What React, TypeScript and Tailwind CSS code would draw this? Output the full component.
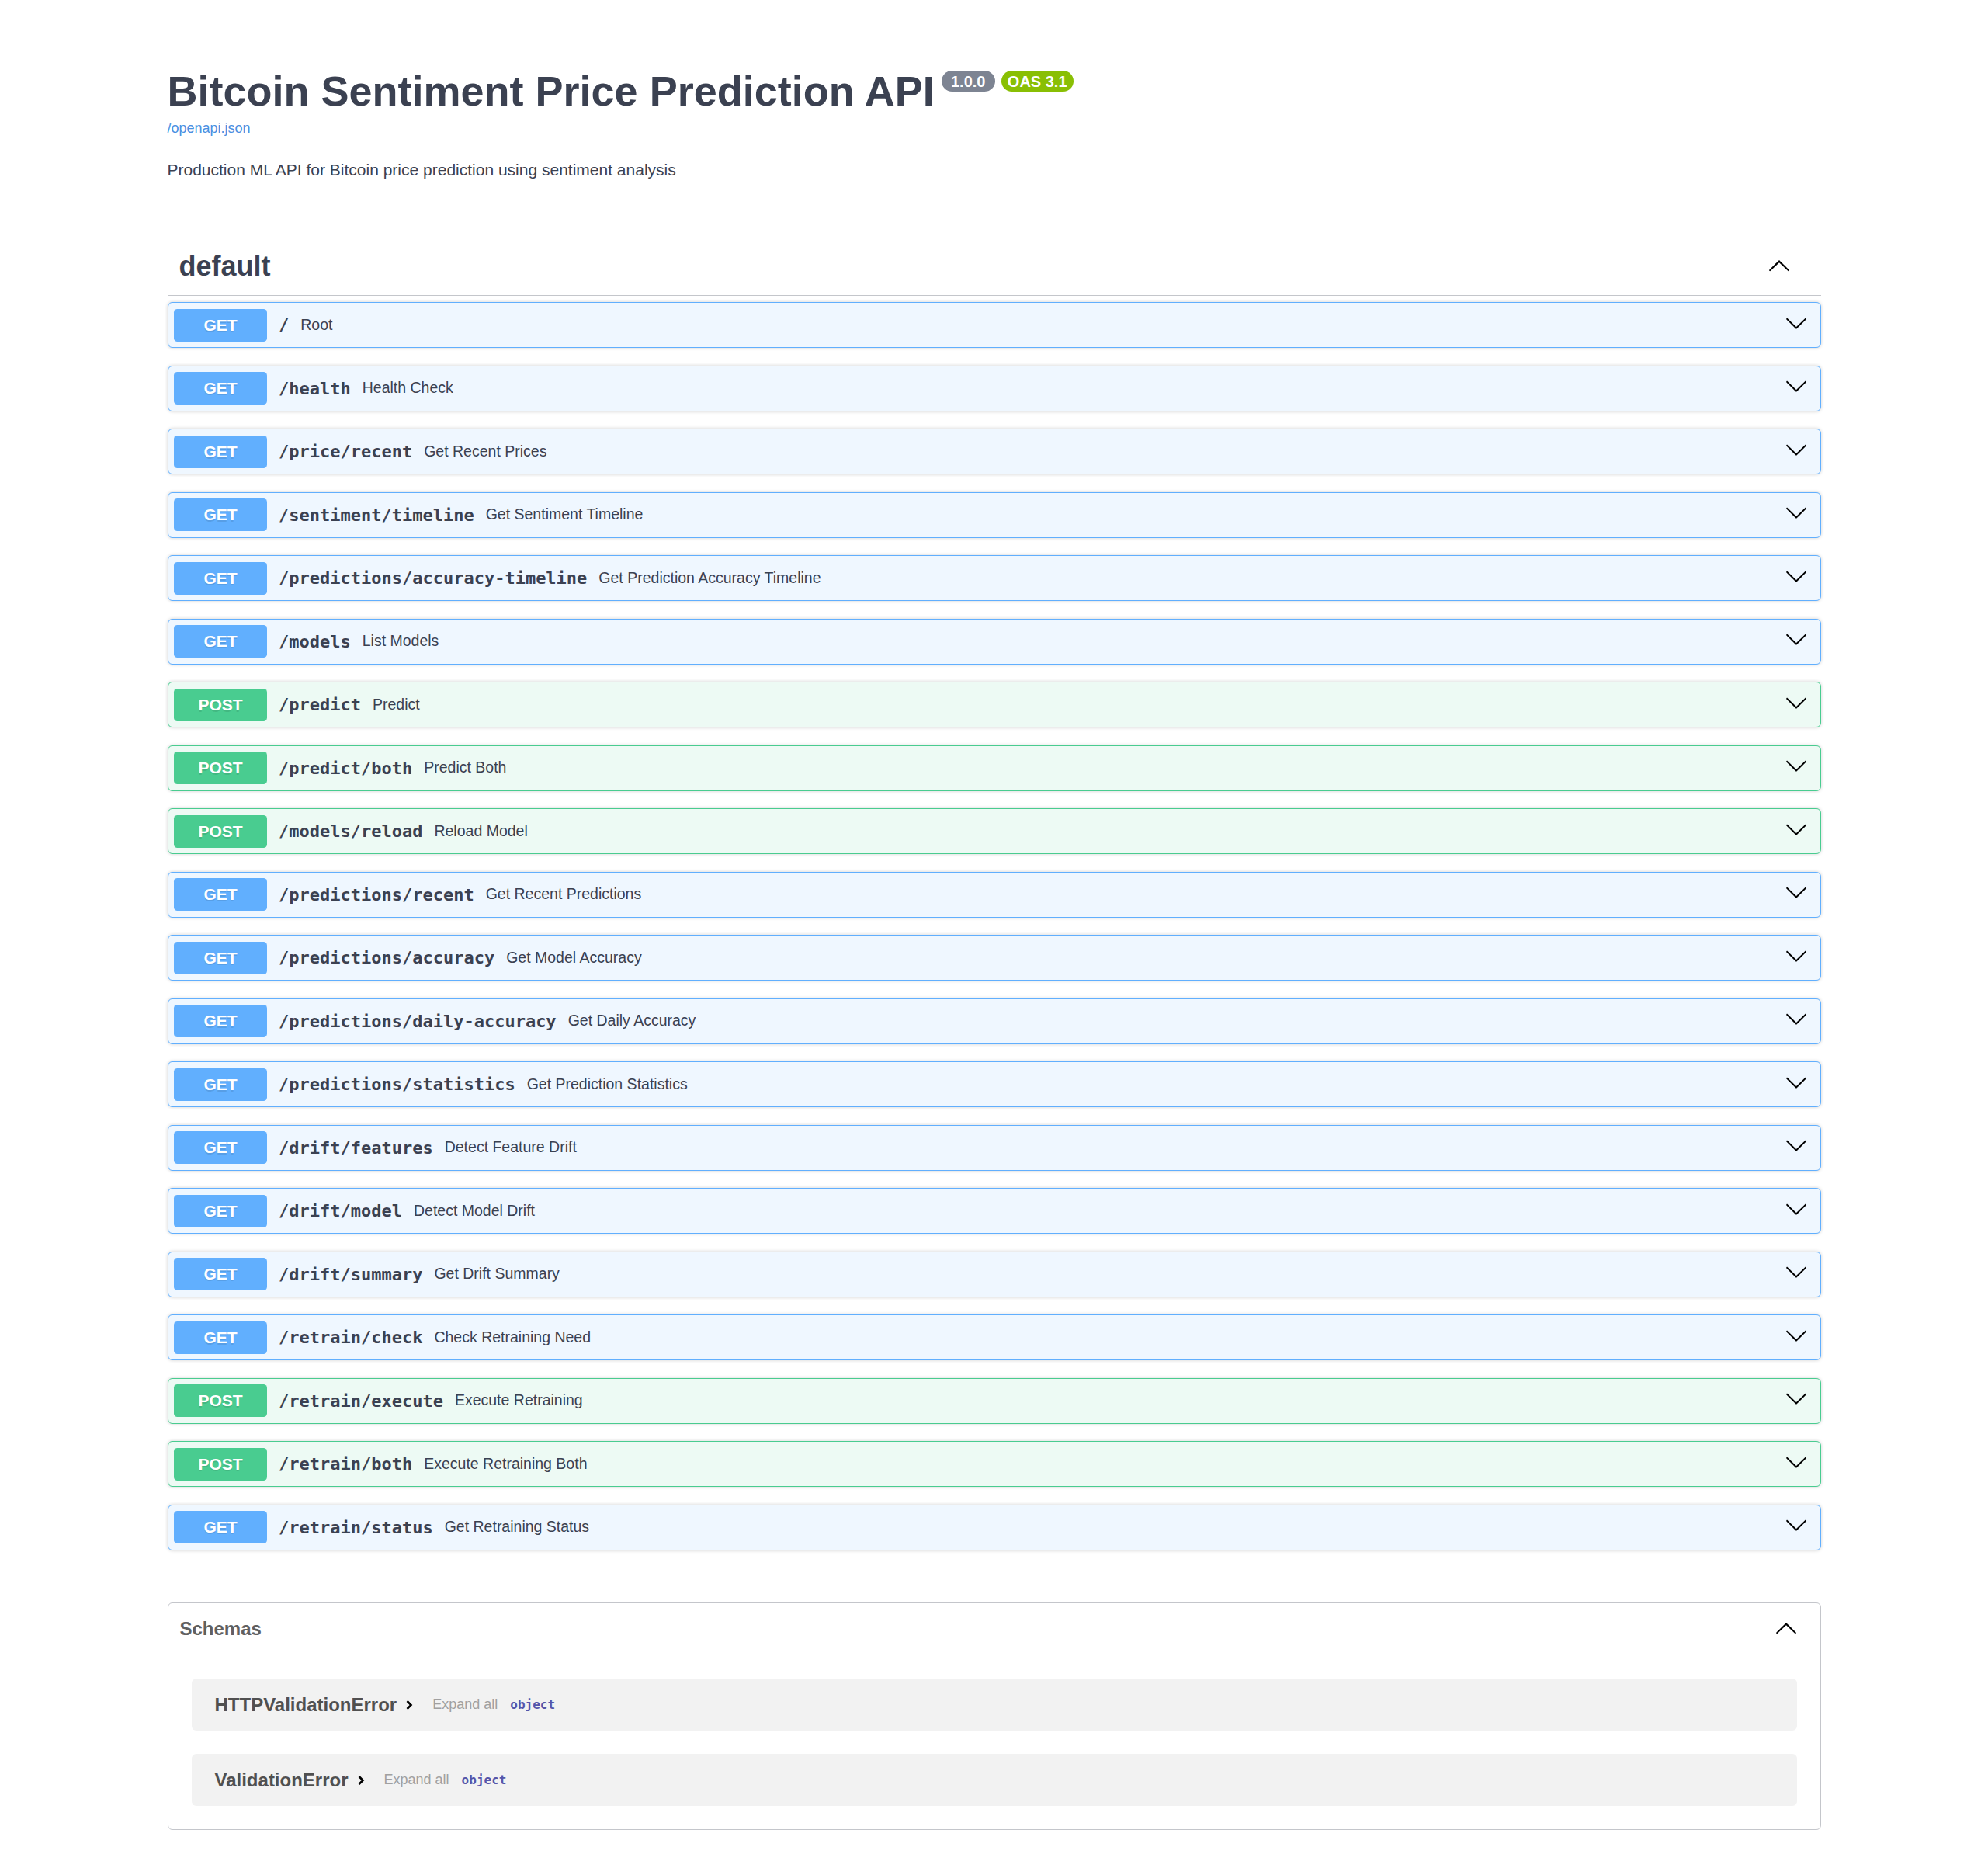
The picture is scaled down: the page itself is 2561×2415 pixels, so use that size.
import React from 'react';

type Endpoint = {
  method: 'GET' | 'POST';
  path: string;
  summary: string;
};

const endpoints: Endpoint[] = [
  { method: 'GET', path: '/', summary: 'Root' },
  { method: 'GET', path: '/health', summary: 'Health Check' },
  { method: 'GET', path: '/price/recent', summary: 'Get Recent Prices' },
  { method: 'GET', path: '/sentiment/timeline', summary: 'Get Sentiment Timeline' },
  { method: 'GET', path: '/predictions/accuracy-timeline', summary: 'Get Prediction Accuracy Timeline' },
  { method: 'GET', path: '/models', summary: 'List Models' },
  { method: 'POST', path: '/predict', summary: 'Predict' },
  { method: 'POST', path: '/predict/both', summary: 'Predict Both' },
  { method: 'POST', path: '/models/reload', summary: 'Reload Model' },
  { method: 'GET', path: '/predictions/recent', summary: 'Get Recent Predictions' },
  { method: 'GET', path: '/predictions/accuracy', summary: 'Get Model Accuracy' },
  { method: 'GET', path: '/predictions/daily-accuracy', summary: 'Get Daily Accuracy' },
  { method: 'GET', path: '/predictions/statistics', summary: 'Get Prediction Statistics' },
  { method: 'GET', path: '/drift/features', summary: 'Detect Feature Drift' },
  { method: 'GET', path: '/drift/model', summary: 'Detect Model Drift' },
  { method: 'GET', path: '/drift/summary', summary: 'Get Drift Summary' },
  { method: 'GET', path: '/retrain/check', summary: 'Check Retraining Need' },
  { method: 'POST', path: '/retrain/execute', summary: 'Execute Retraining' },
  { method: 'POST', path: '/retrain/both', summary: 'Execute Retraining Both' },
  { method: 'GET', path: '/retrain/status', summary: 'Get Retraining Status' },
];

const schemas: string[] = ['HTTPValidationError', 'ValidationError'];

// swagger-ui's own arrow glyph, flipped for the expanded sections
const Arrow = ({ up = false, className = '' }: { up?: boolean; className?: string }) => (
  <svg
    width="30"
    height="30"
    viewBox="0 0 20 20"
    className={`shrink-0 fill-black ${up ? 'rotate-180' : ''} ${className}`}
  >
    <path d="M17.418 6.109c.272-.268.709-.268.979 0s.271.701 0 .969l-7.908 7.83c-.27.268-.707.268-.979 0l-7.908-7.83c-.27-.268-.27-.701 0-.969.271-.268.709-.268.979 0L10 13.25l7.418-7.141z" />
  </svg>
);

const OpBlock = ({ method, path, summary }: Endpoint) => {
  const isPost = method === 'POST';
  return (
    <div
      className={`mb-[22.5px] rounded-[6px] border shadow-[0_0_4.5px_rgba(0,0,0,0.19)] ${
        isPost ? 'border-[#49cc90] bg-[#edfaf4]' : 'border-[#61affe] bg-[#eff7ff]'
      }`}
    >
      <div className="flex items-center py-[7.5px] pl-[7.5px] pr-[16px]">
        <span
          className={`w-[120px] shrink-0 rounded-[4.5px] py-[9px] text-center text-[21px] leading-[24px] font-bold text-white [text-shadow:0_1.5px_0_rgba(0,0,0,0.1)] ${
            isPost ? 'bg-[#49cc90]' : 'bg-[#61affe]'
          }`}
        >
          {method}
        </span>
        <span className="px-[15px] font-['DejaVu_Sans_Mono',monospace] text-[22px] font-bold text-[#3b4151]">
          {path}
        </span>
        <span className="flex-1 text-[19.5px] text-[#3b4151]">{summary}</span>
        <Arrow className="mb-[6px]" />
      </div>
    </div>
  );
};

const ModelRow = ({ name }: { name: string }) => (
  <div className="mx-[30px] flex h-[67px] items-center rounded-[6px] bg-[#f2f2f2] px-[30px]">
    <span className="text-[24px] font-bold text-[#505050]">{name}</span>
    <svg width="10" height="14" viewBox="0 0 10 14" className="ml-[11px] shrink-0">
      <path d="M2.5 2 L7.5 7 L2.5 12" fill="none" stroke="#000" strokeWidth="2.6" />
    </svg>
    <span className="ml-[25px] text-[18px] text-[#a0a0a0]">Expand all</span>
    <span className="ml-[16px] font-['DejaVu_Sans_Mono',monospace] text-[16px] font-bold text-[#55a]">
      object
    </span>
  </div>
);

export default function App() {
  return (
    <div className="min-h-screen bg-white font-['Liberation_Sans',Arial,sans-serif] text-[#3b4151]">
      <div className="mx-auto w-[2130px] pt-[87px] pb-[58px]">
        {/* info */}
        <div>
          <div className="flex items-start">
            <h2 className="text-[54px] leading-[60px] font-bold text-[#3b4151]">
              Bitcoin Sentiment Price Prediction API
            </h2>
            <span className="ml-[9px] mt-[4px] flex h-[27px] w-[69px] items-center justify-center rounded-full bg-[#7d8492] text-[20px] font-bold text-white">
              1.0.0
            </span>
            <span className="ml-[8px] mt-[4px] flex h-[27px] w-[93px] items-center justify-center rounded-full bg-[#89bf04] text-[20px] font-bold text-white">
              OAS 3.1
            </span>
          </div>
          <a href="#" className="mt-[8px] block text-[18px] leading-[21px] text-[#4990e2]">
            /openapi.json
          </a>
          <p className="mt-[31px] text-[21px] leading-[24px] text-[#3b4151]">
            Production ML API for Bitcoin price prediction using sentiment analysis
          </p>
        </div>

        {/* default tag */}
        <div className="mt-[74px]">
          <div className="mb-[8px] flex h-[76px] items-center border-b border-[#c4c6cb] pl-[15px] pr-[39px]">
            <h3 className="flex-1 text-[36px] font-bold text-[#3b4151]">default</h3>
            <Arrow up />
          </div>
          {endpoints.map((ep) => (
            <OpBlock key={ep.method + ep.path} {...ep} />
          ))}
        </div>

        {/* schemas */}
        <section className="mt-[67.5px] rounded-[6px] border border-[#c4c6cb]">
          <div className="flex h-[67px] items-center border-b border-[#c4c6cb] pl-[15px] pr-[29px]">
            <h4 className="flex-1 text-[24px] font-bold text-[#606060]">Schemas</h4>
            <Arrow up />
          </div>
          <div className="flex flex-col gap-[30px] py-[30px]">
            {schemas.map((s) => (
              <ModelRow key={s} name={s} />
            ))}
          </div>
        </section>
      </div>
    </div>
  );
}
